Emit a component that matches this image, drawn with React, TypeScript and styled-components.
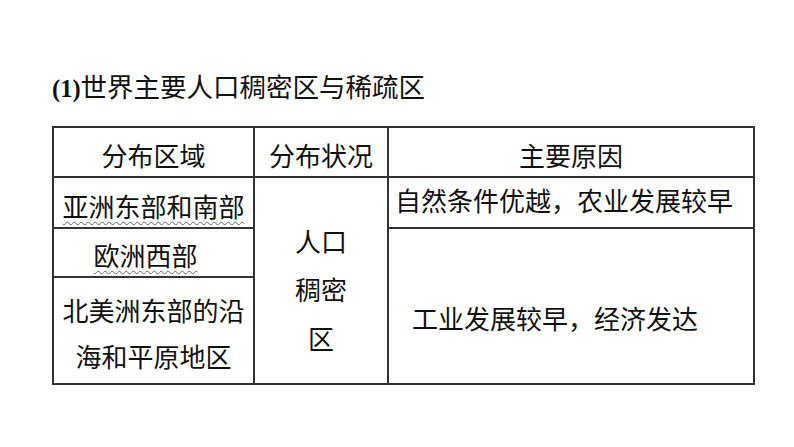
import React from "react";
import styled, { createGlobalStyle } from "styled-components";

const GlobalStyle = createGlobalStyle`
  html, body {
    margin: 0;
    padding: 0;
    background: #ffffff;
  }
`;

const Page = styled.div`
  padding: 73px 0 0 52px;
  font-family: "Liberation Serif", "Noto Sans CJK SC", serif;
  color: #111;
`;

const Title = styled.h2`
  margin: 0;
  font-size: 26.5px;
  line-height: 30px;
  font-weight: normal;
  color: #111;
`;

const Num = styled.b`
  font-weight: bold;
  font-size: 24.5px;
`;

const Grid = styled.table`
  margin-top: 22px;
  width: 701px;
  table-layout: fixed;
  border-collapse: collapse;
  font-size: 26px;
`;

const Row = styled.tr<{ $h: number }>`
  height: ${(p) => p.$h}px;
`;

const Cell = styled.td<{
  $dy?: number;
  $align?: "left" | "center";
  $pl?: number;
  $pr?: number;
  $lh?: number;
}>`
  border: 2px solid #333;
  padding: ${(p) => (p.$dy ?? 0) * 2}px ${(p) => p.$pr ?? 0}px 0
    ${(p) => p.$pl ?? 0}px;
  text-align: ${(p) => p.$align ?? "center"};
  vertical-align: middle;
  line-height: ${(p) => p.$lh ?? 32}px;
  white-space: nowrap;
`;

const Squiggle = styled.span`
  text-decoration: underline wavy #666;
  text-decoration-thickness: 1px;
  text-underline-offset: 4px;
`;

export default function App() {
  return (
    <>
      <GlobalStyle />
      <Page>
        <Title>
          <Num>(1)</Num>世界主要人口稠密区与稀疏区
        </Title>
        <Grid>
          <colgroup>
            <col style={{ width: 201 }} />
            <col style={{ width: 134 }} />
            <col style={{ width: 366 }} />
          </colgroup>
          <tbody>
            <Row $h={50}>
              <Cell $dy={5.5}>分布区域</Cell>
              <Cell $dy={5.5}>分布状况</Cell>
              <Cell $dy={5.5}>主要原因</Cell>
            </Row>
            <Row $h={51}>
              <Cell $dy={6}>
                <Squiggle>亚洲东部和南部</Squiggle>
              </Cell>
              <Cell rowSpan={3} $dy={12} $lh={48.5}>
                人口
                <br />
                稠密
                <br />区
              </Cell>
              <Cell $dy={0.5} $align="left" $pl={6}>
                自然条件优越，农业发展较早
              </Cell>
            </Row>
            <Row $h={49}>
              <Cell $dy={5} $pr={16}>
                <Squiggle>欧洲西部</Squiggle>
              </Cell>
              <Cell rowSpan={2} $dy={14.5} $align="left" $pl={23}>
                工业发展较早，经济发达
              </Cell>
            </Row>
            <Row $h={107}>
              <Cell $dy={5} $lh={46}>
                北美洲东部的沿
                <br />
                海和平原地区
              </Cell>
            </Row>
          </tbody>
        </Grid>
      </Page>
    </>
  );
}
